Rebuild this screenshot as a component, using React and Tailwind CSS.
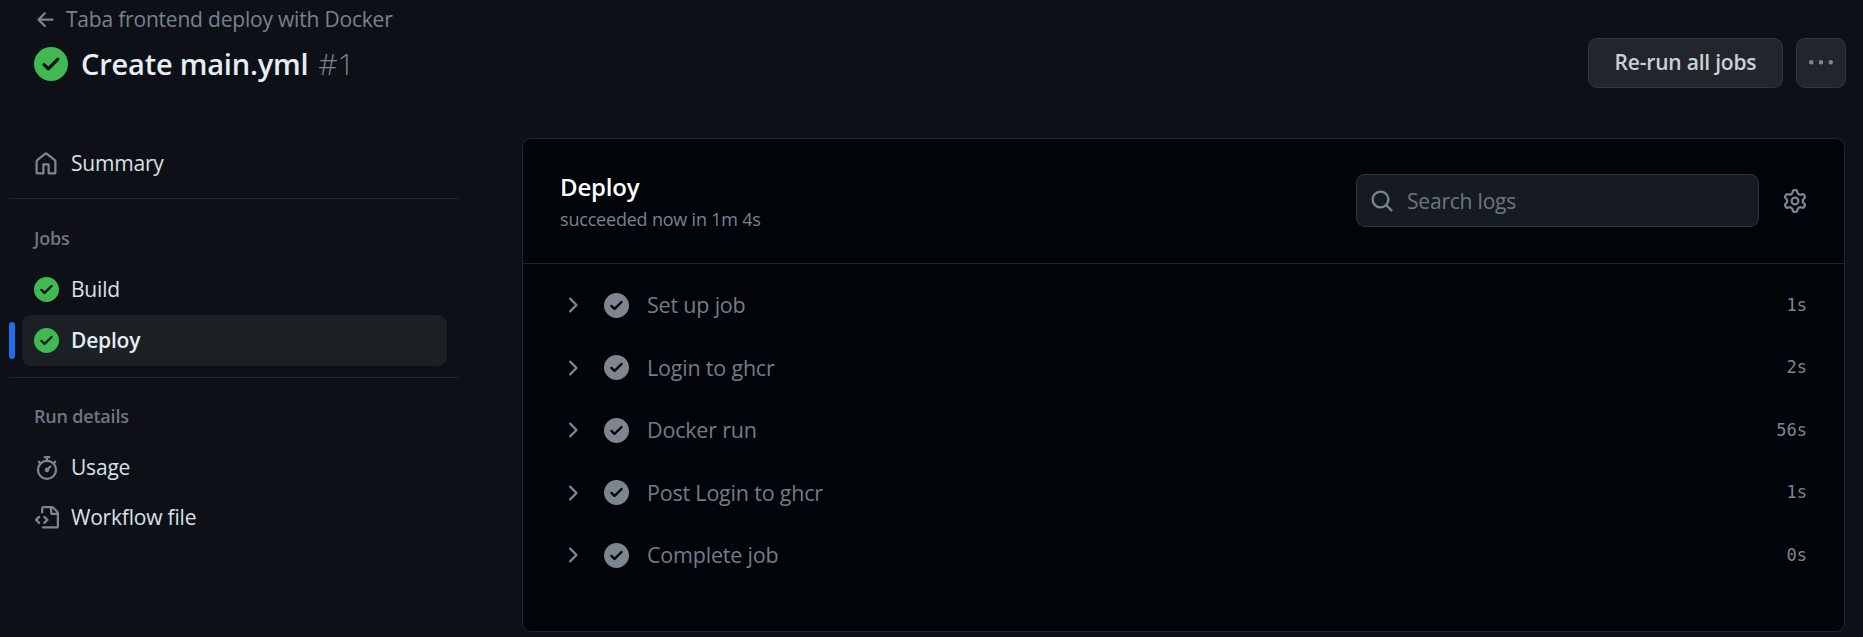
import React from "react";

const paths = {
  arrowLeft:
    "M7.78 12.53a.75.75 0 0 1-1.06 0L2.47 8.28a.75.75 0 0 1 0-1.06l4.25-4.25a.751.751 0 0 1 1.042.018.751.751 0 0 1 .018 1.042L4.81 7h7.44a.75.75 0 0 1 0 1.5H4.81l2.97 2.97a.75.75 0 0 1 0 1.06Z",
  check:
    "M8 16A8 8 0 1 1 8 0a8 8 0 0 1 0 16Zm3.78-9.72a.751.751 0 0 0-.018-1.042.751.751 0 0 0-1.042-.018L6.75 9.19 5.28 7.72a.751.751 0 0 0-1.042.018.751.751 0 0 0-.018 1.042l2 2a.75.75 0 0 0 1.06 0Z",
  home:
    "M6.906.664a1.749 1.749 0 0 1 2.187 0l5.25 4.2c.415.332.657.835.657 1.367v7.019A1.75 1.75 0 0 1 13.25 15h-3.5a.75.75 0 0 1-.75-.75V9H7v5.25a.75.75 0 0 1-.75.75h-3.5A1.75 1.75 0 0 1 1 13.25V6.23c0-.531.242-1.034.657-1.366l5.25-4.2Zm1.25 1.171a.25.25 0 0 0-.312 0l-5.25 4.2a.25.25 0 0 0-.094.196v7.019c0 .138.112.25.25.25H5.5V8.25a.75.75 0 0 1 .75-.75h3.5a.75.75 0 0 1 .75.75v5.25h2.75a.25.25 0 0 0 .25-.25V6.23a.25.25 0 0 0-.094-.195Z",
  stopwatch:
    "M5.75.75A.75.75 0 0 1 6.5 0h3a.75.75 0 0 1 0 1.5h-.75v1l-.001.041a6.724 6.724 0 0 1 3.464 1.435l.007-.006.75-.75a.751.751 0 0 1 1.06 1.06l-.75.75-.006.007a6.75 6.75 0 1 1-10.548 0L2.72 5.03l-.75-.75a.751.751 0 0 1 1.06-1.06l.75.75.007.006A6.72 6.72 0 0 1 7.25 2.541V1.5H6.5a.75.75 0 0 1-.75-.75ZM8 14.5a5.25 5.25 0 1 0-.001-10.501A5.25 5.25 0 0 0 8 14.5Zm.389-6.7 1.33-1.33a.75.75 0 1 1 1.061 1.06L9.45 8.861A1.503 1.503 0 0 1 8 10.75a1.499 1.499 0 1 1 .389-2.95Z",
  fileCode:
    "M4 1.75C4 .784 4.784 0 5.75 0h5.586c.464 0 .909.184 1.237.513l2.914 2.914c.329.328.513.773.513 1.237v8.586A1.75 1.75 0 0 1 14.25 15h-9a.75.75 0 0 1 0-1.5h9a.25.25 0 0 0 .25-.25V6h-2.75A1.75 1.75 0 0 1 10 4.25V1.5H5.75a.25.25 0 0 0-.25.25v2.5a.75.75 0 0 1-1.5 0Zm1.72 4.97a.75.75 0 0 1 1.06 0l2 2a.75.75 0 0 1 0 1.06l-2 2a.749.749 0 0 1-1.275-.326.749.749 0 0 1 .215-.734l1.47-1.47-1.47-1.47a.75.75 0 0 1 0-1.06ZM3.28 7.78 1.81 9.25l1.47 1.47a.751.751 0 0 1-.018 1.042.751.751 0 0 1-1.042.018l-2-2a.75.75 0 0 1 0-1.06l2-2a.751.751 0 0 1 1.042.018.751.751 0 0 1 .018 1.042Zm8.22-6.218V4.25c0 .138.112.25.25.25h2.688l-.011-.013-2.914-2.914-.013-.011Z",
  search:
    "M10.68 11.74a6 6 0 0 1-7.922-8.982 6 6 0 0 1 8.982 7.922l3.04 3.04a.749.749 0 0 1-.326 1.275.749.749 0 0 1-.734-.215ZM11.5 7a4.499 4.499 0 1 0-8.997 0A4.499 4.499 0 0 0 11.5 7Z",
  gear:
    "M8 0a8.2 8.2 0 0 1 .701.031C9.444.095 9.99.645 10.16 1.29l.288 1.107c.018.066.079.158.212.224.231.114.454.243.668.386.123.082.233.09.299.071l1.103-.303c.644-.176 1.392.021 1.82.63.27.385.506.792.704 1.218.315.675.111 1.422-.364 1.891l-.814.806c-.049.048-.098.147-.088.294.016.257.016.515 0 .772-.01.147.038.246.088.294l.814.806c.475.469.679 1.216.364 1.891a7.977 7.977 0 0 1-.704 1.217c-.428.61-1.176.807-1.82.63l-1.102-.302c-.067-.019-.177-.011-.3.071a5.909 5.909 0 0 1-.668.386c-.133.066-.194.158-.211.224l-.29 1.106c-.168.646-.715 1.196-1.458 1.26a8.006 8.006 0 0 1-1.402 0c-.743-.064-1.289-.614-1.458-1.26l-.289-1.106c-.018-.066-.079-.158-.212-.224a5.738 5.738 0 0 1-.668-.386c-.123-.082-.233-.09-.299-.071l-1.103.303c-.644.176-1.392-.021-1.82-.63a8.12 8.12 0 0 1-.704-1.218c-.315-.675-.111-1.422.363-1.891l.815-.806c.05-.048.098-.147.088-.294a6.214 6.214 0 0 1 0-.772c.01-.147-.038-.246-.088-.294l-.815-.806C.635 6.045.431 5.298.746 4.623a7.92 7.92 0 0 1 .704-1.217c.428-.61 1.176-.807 1.82-.63l1.102.302c.067.019.177.011.3-.071.214-.143.437-.272.668-.386.133-.066.194-.158.211-.224l.29-1.106C6.009.645 6.556.095 7.299.03 7.53.01 7.764 0 8 0Zm-.571 1.525c-.036.003-.108.036-.137.146l-.289 1.105c-.147.561-.549.967-.998 1.189-.173.086-.34.183-.5.29-.417.278-.97.423-1.529.27l-1.103-.303c-.109-.03-.175.016-.195.045-.22.312-.412.644-.573.99-.014.031-.021.11.059.19l.815.806c.411.406.562.957.53 1.456a4.709 4.709 0 0 0 0 .582c.032.499-.119 1.05-.53 1.456l-.815.806c-.081.08-.073.159-.059.19.162.346.353.677.573.989.02.03.085.076.195.046l1.102-.303c.56-.153 1.113-.008 1.53.27.161.107.328.204.501.29.447.222.85.629.997 1.189l.289 1.105c.029.109.101.143.137.146a6.6 6.6 0 0 0 1.142 0c.036-.003.108-.036.137-.146l.289-1.105c.147-.561.549-.967.998-1.189.173-.086.34-.183.5-.29.417-.278.97-.423 1.529-.27l1.103.303c.109.029.175-.016.195-.045.22-.313.411-.644.573-.99.014-.031.021-.11-.059-.19l-.815-.806c-.411-.406-.562-.957-.53-1.456a4.709 4.709 0 0 0 0-.582c-.032-.499.119-1.05.53-1.456l.815-.806c.081-.08.073-.159.059-.19a6.464 6.464 0 0 0-.573-.989c-.02-.03-.085-.076-.195-.046l-1.102.303c-.56.153-1.113.008-1.53-.27a4.44 4.44 0 0 0-.501-.29c-.447-.222-.85-.629-.997-1.189l-.289-1.105c-.029-.11-.101-.143-.137-.146a6.6 6.6 0 0 0-1.142 0ZM11 8a3 3 0 1 1-6 0 3 3 0 0 1 6 0ZM9.5 8a1.5 1.5 0 1 0-3.001.001A1.5 1.5 0 0 0 9.5 8Z",
  chevron:
    "M6.22 3.22a.75.75 0 0 1 1.06 0l4.25 4.25a.75.75 0 0 1 0 1.06l-4.25 4.25a.751.751 0 0 1-1.042-.018.751.751 0 0 1-.018-1.042L9.94 8 6.22 4.28a.75.75 0 0 1 0-1.06Z",
  kebab:
    "M8 9a1.5 1.5 0 1 0 0-3 1.5 1.5 0 0 0 0 3ZM1.5 9a1.5 1.5 0 1 0 0-3 1.5 1.5 0 0 0 0 3Zm13 0a1.5 1.5 0 1 0 0-3 1.5 1.5 0 0 0 0 3Z",
};

const Icon = ({ name, size = 24, className = "" }) => (
  <svg width={size} height={size} viewBox="0 0 16 16" fill="currentColor" className={`shrink-0 ${className}`}>
    <path d={paths[name]} />
  </svg>
);

const steps = [
  { name: "Set up job", time: "1s" },
  { name: "Login to ghcr", time: "2s" },
  { name: "Docker run", time: "56s" },
  { name: "Post Login to ghcr", time: "1s" },
  { name: "Complete job", time: "0s" },
];

const SideItem = ({ icon, label, active }) => (
  <div className="relative h-[51px] ml-[22px] mr-[12px]">
    {active && (
      <span className="absolute left-[-13px] top-[7px] w-[6px] h-[37px] rounded-full bg-[#1f6feb]" />
    )}
    <div
      className={`flex items-center h-full rounded-[9px] pl-[12px] ${
        active ? "bg-[#1b2025] font-semibold text-[#e6edf3]" : "text-[#d9e0e7]"
      }`}
    >
      <span className="w-[25px] flex justify-center shrink-0">{icon}</span>
      <span className="ml-[12px]">{label}</span>
    </div>
  </div>
);

export default function App() {
  return (
    <div
      className="w-[1863px] h-[637px] overflow-hidden bg-[#0d1117] text-[#e6edf3] text-[21px] tracking-[-0.2px]"
      style={{ fontFamily: '"Open Sans", "Noto Sans", sans-serif' }}
    >
      {/* top bar */}
      <div className="flex h-[138px] pl-[34px] pr-[17px]">
        <div className="flex-1">
          <div className="flex items-center h-[39px] text-[#768390]">
            <Icon name="arrowLeft" size={24} />
            <span className="ml-[8px]">Taba frontend deploy with Docker</span>
          </div>
          <div className="flex items-center h-[49px] text-[29px] leading-none">
            <Icon name="check" size={34} className="text-[#3fb950]" />
            <span className="ml-[13px] font-semibold">Create main.yml</span>
            <span className="ml-[10px] text-[30px] text-[#7d8590] font-light">#1</span>
          </div>
        </div>
        <div className="flex items-start gap-[13px] pt-[38px]">
          <button className="h-[50px] w-[195px] rounded-[9px] border border-[#30363d] bg-[#21262d] font-semibold text-[#c9d1d9]">
            Re-run all jobs
          </button>
          <button className="h-[50px] w-[50px] rounded-[9px] border border-[#30363d] bg-[#21262d] flex items-center justify-center text-[#7d8590]">
            <Icon name="kebab" size={24} />
          </button>
        </div>
      </div>

      <div className="flex">
        {/* sidebar */}
        <aside className="w-[522px] shrink-0">
          <div className="w-[459px] pl-[9px]">
            <div className="flex items-center h-[52px] pl-[25px] text-[#d9e0e7]">
              <Icon name="home" size={24} className="text-[#7d8590]" />
              <span className="ml-[13px]">Summary</span>
            </div>
            <div className="mt-[8px] h-[1px] bg-[#21262d]" />
            <div className="mt-[27px] h-[24px] pl-[25px] flex items-center text-[18px] font-semibold text-[#6e7681]">
              Jobs
            </div>
            <div className="mt-[14px] -ml-[9px]">
              <SideItem icon={<Icon name="check" size={25} className="text-[#3fb950]" />} label="Build" />
              <SideItem active icon={<Icon name="check" size={25} className="text-[#3fb950]" />} label="Deploy" />
            </div>
            <div className="mt-[11px] h-[1px] bg-[#21262d]" />
            <div className="mt-[26px] h-[24px] pl-[25px] flex items-center text-[18px] font-semibold text-[#6e7681]">
              Run details
            </div>
            <div className="mt-[14px] -ml-[9px]">
              <SideItem icon={<Icon name="stopwatch" size={24} className="text-[#7d8590]" />} label="Usage" />
              <div className="-mt-[1px]">
                <SideItem icon={<Icon name="fileCode" size={24} className="text-[#7d8590]" />} label="Workflow file" />
              </div>
            </div>
          </div>
        </aside>

        {/* log panel */}
        <main className="flex-1 mr-[18px] h-[494px] rounded-[9px] border border-[#21262d] bg-[#010409]">
          <div className="flex items-center justify-between h-[125px] pl-[37px] pr-[37px] border-b border-[#21262d]">
            <div>
              <div className="font-semibold text-white text-[24px] leading-[30px]">Deploy</div>
              <div className="text-[18px] leading-[24px] text-[#768390] mt-[5px]">succeeded now in 1m 4s</div>
            </div>
            <div className="flex items-center -mt-[1px]">
              <div className="flex items-center w-[403px] h-[53px] rounded-[9px] border border-[#30363d] bg-[#161b22] pl-[13px] text-[#6e7681]">
                <Icon name="search" size={24} className="text-[#7d8590]" />
                <span className="ml-[13px] mt-[2px]">Search logs</span>
              </div>
              <Icon name="gear" size={24} className="ml-[24px] text-[#7d8590]" />
            </div>
          </div>
          <div className="pt-[10px]">
            {steps.map((s) => (
              <div key={s.name} className="flex items-center h-[62.5px] pl-[37px] pr-[37px] text-[#7d8590] text-[21.5px]">
                <Icon name="chevron" size={24} />
                <Icon name="check" size={25} className="ml-[20px]" />
                <span className="ml-[18px] flex-1 text-[#747c87]">{s.name}</span>
                <span
                  className="text-[17px] tracking-normal"
                  style={{ fontFamily: '"DejaVu Sans Mono", monospace' }}
                >
                  {s.time}
                </span>
              </div>
            ))}
          </div>
        </main>
      </div>
    </div>
  );
}
